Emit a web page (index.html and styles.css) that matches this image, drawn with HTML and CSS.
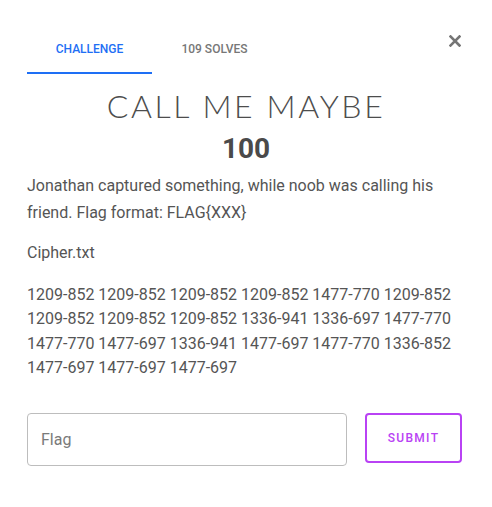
FILE: index.html
```html
<!DOCTYPE html>
<html>
<head>
<meta charset="utf-8">
<link rel="stylesheet" href="styles.css">
</head>
<body>
<div class="modal">
  <button class="close" aria-label="Close">
    <svg width="12" height="12" viewBox="0 0 12 12"><path d="M1.5 1.5 L10.5 10.5 M10.5 1.5 L1.5 10.5" stroke="#757575" stroke-width="2.6" stroke-linecap="square"/></svg>
  </button>
  <div class="tabs">
    <div class="tab active">CHALLENGE</div>
    <div class="tab">109 SOLVES</div>
  </div>
  <h1 class="title">CALL ME MAYBE</h1>
  <div class="points">100</div>
  <p class="desc">Jonathan captured something, while noob was calling his friend. Flag format: FLAG{XXX}</p>
  <p class="file">Cipher.txt</p>
  <p class="cipher">1209-852 1209-852 1209-852 1209-852 1477-770 1209-852 1209-852 1209-852 1209-852 1336-941 1336-697 1477-770 1477-770 1477-697 1336-941 1477-697 1477-770 1336-852 1477-697 1477-697 1477-697</p>
  <form class="submit-row">
    <input class="flag" type="text" placeholder="Flag">
    <button class="submit" type="button">SUBMIT</button>
  </form>
</div>
</body>
</html>
```
FILE: styles.css
```css
* { box-sizing: border-box; }
html, body { margin: 0; background: #fff; }
body { font-family: Roboto, "Liberation Sans", sans-serif; color: #555; }
.modal { position: relative; padding: 26px 27px 0 27px; width: 492px; }
.close { position: absolute; top: 35px; right: 31px; background: none; border: 0; padding: 0; width: 12px; height: 12px; display: block; }
.close svg { display: block; }
.tabs { display: flex; height: 48px; }
.tab { width: 125px; display: flex; align-items: center; justify-content: center; font-size: 12px; font-weight: 500; color: #777; letter-spacing: 0; padding-bottom: 2px; }
.tab.active { color: #1e6ff5; border-bottom: 2px solid #1e6ff5; padding-bottom: 0; }
.title { margin: 14px 0 0; text-align: center; font-family: Lato, sans-serif; font-weight: 300; font-size: 32px; line-height: 36px; letter-spacing: 2.6px; color: #4d4d4d; }
.points { text-align: center; font-size: 28px; font-weight: 700; line-height: 32px; color: #4a4a4a; margin-top: 9px; }
p { margin: 0; font-size: 16px; }
.desc { line-height: 27px; margin-top: 7px; color: #555; }
.file { margin-top: 13px; line-height: 27px; }
.cipher { margin-top: 17px; line-height: 24.4px; }
.submit-row { display: flex; gap: 18px; margin-top: 32px; }
.flag { width: 320px; height: 53px; border: 1px solid #bdbdbd; border-radius: 4px; padding: 0 13px; font-family: Roboto, sans-serif; font-size: 16px; color: #555; outline: none; }
.flag::placeholder { color: #7a7a7a; }
.submit { width: 97px; height: 50px; border: 2px solid #b942f4; border-radius: 4px; background: #fff; color: #b942f4; font-family: Roboto, sans-serif; font-size: 12px; font-weight: 500; letter-spacing: 1.3px; padding: 0; }
```
